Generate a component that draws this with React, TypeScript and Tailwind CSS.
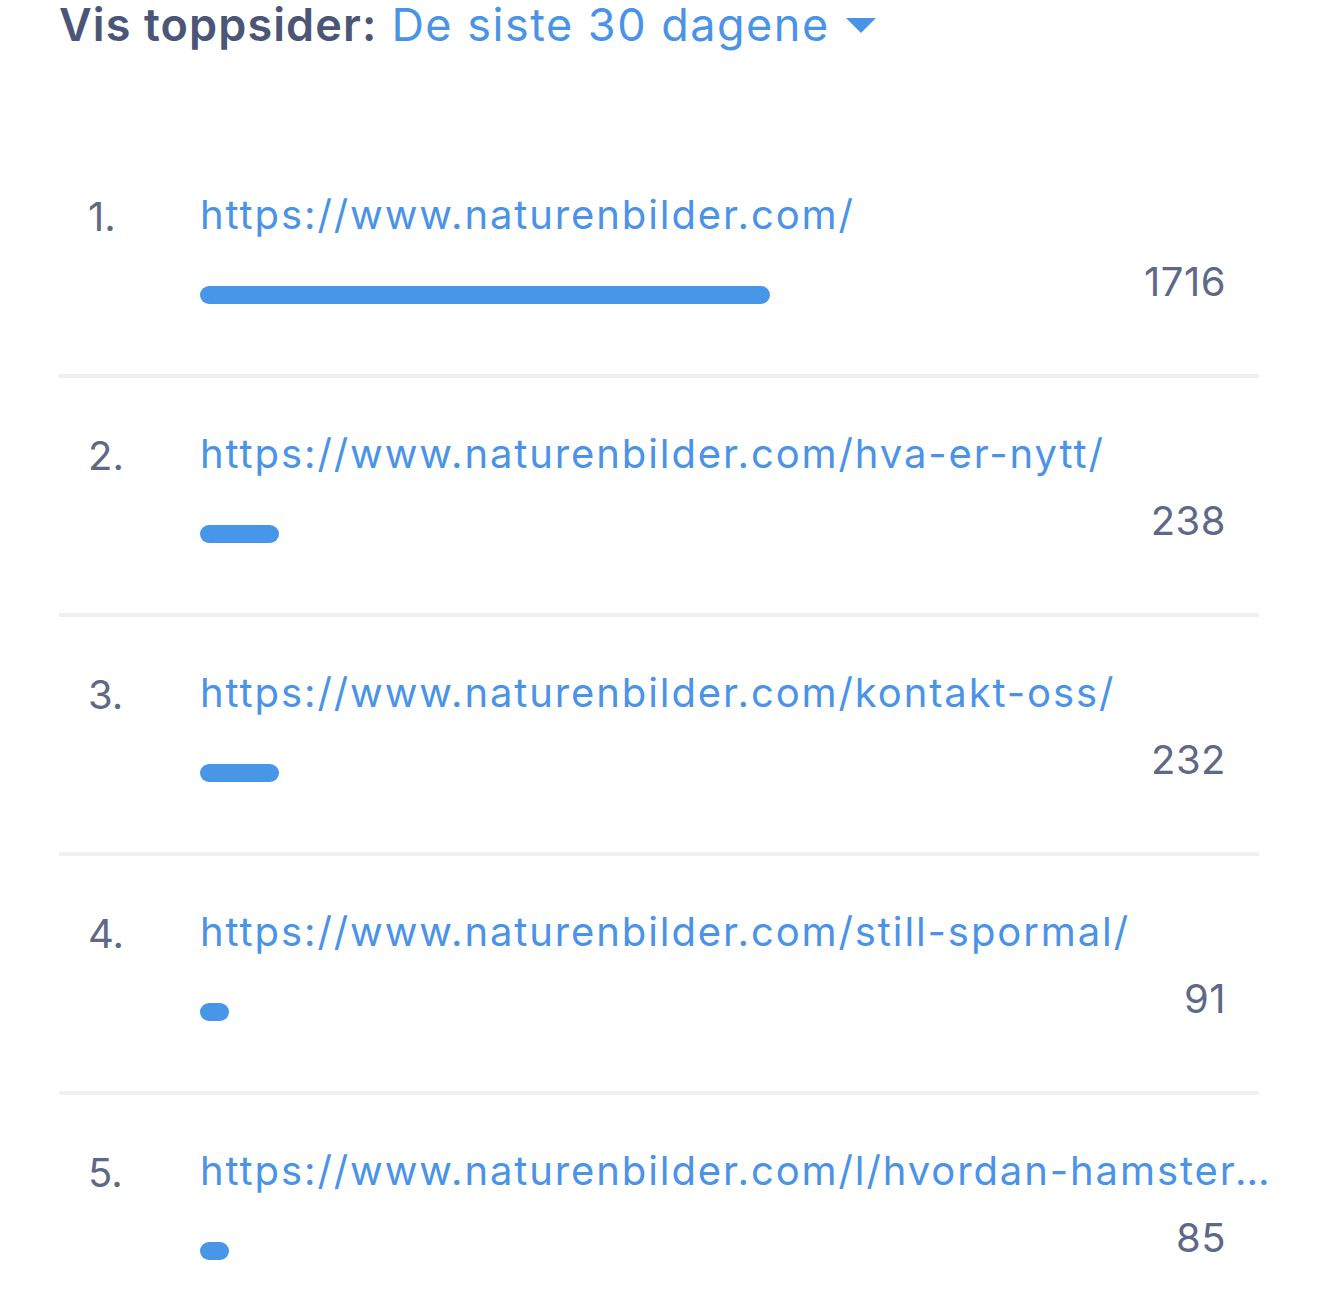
import React from "react";

const rows = [
  { n: "1.", url: "https://www.naturenbilder.com/", count: "1716", w: 570 },
  { n: "2.", url: "https://www.naturenbilder.com/hva-er-nytt/", count: "238", w: 79 },
  { n: "3.", url: "https://www.naturenbilder.com/kontakt-oss/", count: "232", w: 79 },
  { n: "4.", url: "https://www.naturenbilder.com/still-spormal/", count: "91", w: 29 },
  { n: "5.", url: "https://www.naturenbilder.com/l/hvordan-hamster-spiser-gulrot/", count: "85", w: 29 },
];

export default function App() {
  return (
    <div
      className="min-h-[1316px] w-[1319px] bg-white overflow-hidden"
      style={{ fontFamily: "Inter, 'Noto Sans', sans-serif" }}
    >
      <div className="w-[1200px] ml-[59px]">
        <div className="flex items-center h-[50px] text-[45px] leading-[50px]">
          <span className="font-semibold text-[#4b5677] tracking-[1.1px]">Vis toppsider:</span>
          <span className="ml-[14px] text-[#4a93e6] tracking-[1.5px]">De siste 30 dagene</span>
          <svg width="30" height="16" viewBox="0 0 30 16" className="ml-[16px] mt-[2px]">
            <polygon points="0,0 30,0 15,15" fill="#4a93e6" />
          </svg>
        </div>
        <div className="mt-[89px]">
          {rows.map((r, i) => (
            <div
              key={i}
              className={`flex h-[239px] ${i < rows.length - 1 ? "border-b-4 border-[#eef0f3]" : ""}`}
            >
              <div className="w-[141px] pl-[29px] pt-[54px] text-[40px] leading-[48px] text-[#5d6986]">
                {r.n}
              </div>
              <div className="flex-1 min-w-0 pt-[52px]">
                <div className="text-[40px] leading-[48px] text-[#4a93e6] truncate w-[1070px] tracking-[1.9px]">
                  {r.url}
                </div>
                <div className="flex items-center justify-between pr-[33px] mt-[19px]">
                  <div
                    className="h-[18px] rounded-full bg-[#4796e8] mt-[26px]"
                    style={{ width: r.w }}
                  />
                  <div className="text-[40px] leading-[48px] text-[#5d6986] tracking-[0.5px]">{r.count}</div>
                </div>
              </div>
            </div>
          ))}
        </div>
      </div>
    </div>
  );
}
